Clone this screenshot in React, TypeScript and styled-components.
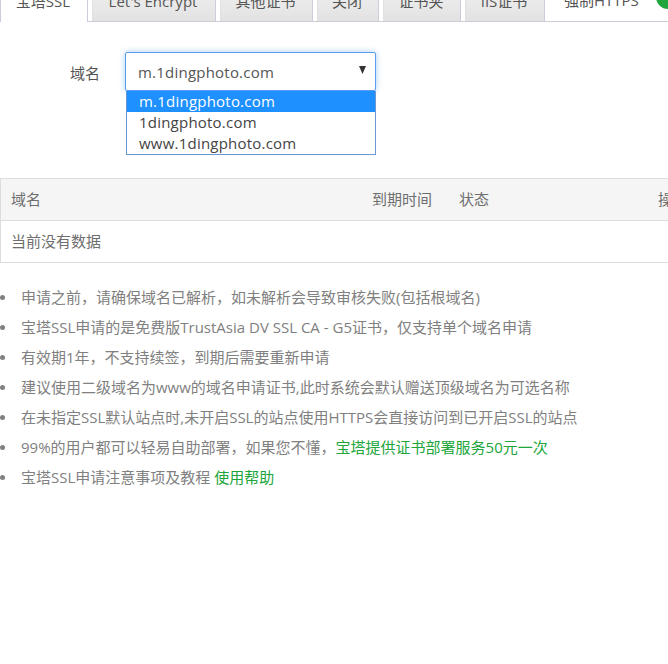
import React from 'react'
import styled, { createGlobalStyle } from 'styled-components'

const Global = createGlobalStyle`
  html, body {
    margin: 0;
    padding: 0;
    background: #fff;
    overflow: hidden;
  }
  * { box-sizing: border-box; }
`

const Page = styled.div`
  width: 668px;
  height: 664px;
  overflow: hidden;
  color: #666;
  font-family: "Open Sans", "Noto Sans CJK SC", sans-serif;
  font-size: 15px;
`

const TabBar = styled.div`
  display: flex;
  align-items: stretch;
  gap: 4px;
  height: 44px;
  margin-top: -22px;
  border-bottom: 1px solid #ccd;
  white-space: nowrap;
`

const Tab = styled.div<{ $active?: boolean; $w: number }>`
  width: ${(p) => p.$w}px;
  flex: none;
  padding-right: 2px;
  text-align: center;
  line-height: 46px;
  font-size: 15px;
  color: #555;
  border: 1px solid #ccd;
  border-width: 0 1px;
  border-left-color: ${(p) => (p.$active ? '#ccd' : '#e0e0e0')};
  background: ${(p) => (p.$active ? '#fff' : 'linear-gradient(#f4f4f4, #e2e2e2)')};
  height: ${(p) => (p.$active ? '44px' : '43px')};
`

const ForceHttps = styled.div`
  display: flex;
  align-items: center;
  flex: none;
  height: 43px;
  margin-left: 15px;
  font-size: 15px;
  color: #555;
`

const SwitchDot = styled.span`
  flex: none;
  width: 24px;
  height: 24px;
  margin-left: 17px;
  margin-top: -6px;
  border-radius: 50%;
  background: #20a53a;
`

const FormRow = styled.div`
  display: flex;
  align-items: center;
  height: 39px;
  margin-top: 30px;
`

const Label = styled.label`
  width: 100px;
  flex: none;
  padding-top: 2px;
  text-align: right;
  font-size: 15px;
  color: #555;
`

const SelectWrap = styled.div`
  position: relative;
  width: 251px;
  height: 39px;
  margin-left: 25px;
`

const SelectBox = styled.div`
  display: flex;
  align-items: center;
  justify-content: space-between;
  height: 39px;
  padding: 0 9px 0 12px;
  border: 1px solid #5b9bef;
  border-radius: 2px;
  box-shadow: 0 0 6px rgba(102, 175, 233, 0.6);
  font-size: 15px;
  letter-spacing: 0.22px;
  color: #555;
  background: #fff;
`

const Caret = styled.svg`
  width: 7px;
  height: 8px;
  margin-top: -3px;
  fill: #333;
`

const OptionList = styled.div`
  position: absolute;
  top: 39px;
  left: 1px;
  right: 0;
  border: 1px solid #6b96d6;
  border-top: 0;
  background: #fff;
`

const Option = styled.div<{ $selected?: boolean }>`
  height: 21px;
  line-height: 21px;
  padding-left: 12px;
  font-size: 15px;
  letter-spacing: 0.22px;
  color: ${(p) => (p.$selected ? '#fff' : '#444')};
  background: ${(p) => (p.$selected ? '#1e90ff' : 'transparent')};
`

const Table = styled.div`
  width: 700px;
  margin-top: 87px;
  border: 1px solid #ddd;
  border-right: 0;
`

const Row = styled.div<{ $head?: boolean }>`
  display: flex;
  align-items: center;
  padding: 0 0 ${(p) => (p.$head ? '3px' : '2px')} 10px;
  font-size: 15px;
  color: #6e6e6e;
  background: ${(p) => (p.$head ? '#f5f5f5' : '#fff')};
  border-bottom: ${(p) => (p.$head ? '1px solid #ddd' : '0')};
  height: ${(p) => (p.$head ? '42px' : '41px')};
`

const Cell = styled.div<{ $w: number }>`
  width: ${(p) => p.$w}px;
  flex: none;
`

const Tips = styled.ul`
  list-style: none;
  margin: 19px 0 0;
  padding: 0;
`

const Tip = styled.li`
  position: relative;
  height: 30px;
  line-height: 30px;
  padding-left: 21px;
  font-size: 15px;
  color: #808080;
  white-space: nowrap;

  &::before {
    content: '';
    position: absolute;
    left: 0;
    top: 13px;
    width: 5px;
    height: 5px;
    border-radius: 50%;
    background: #808080;
  }
`

const Green = styled.a`
  color: #20a53a;
`

const tabs = [
  { label: '宝塔SSL', w: 88, active: true },
  { label: "Let's Encrypt", w: 124 },
  { label: '其他证书', w: 93 },
  { label: '关闭', w: 62 },
  { label: '证书夹', w: 78 },
  { label: 'IIS证书', w: 80 },
]

const tips: React.ReactNode[] = [
  '申请之前，请确保域名已解析，如未解析会导致审核失败(包括根域名)',
  '宝塔SSL申请的是免费版TrustAsia DV SSL CA - G5证书，仅支持单个域名申请',
  '有效期1年，不支持续签，到期后需要重新申请',
  '建议使用二级域名为www的域名申请证书,此时系统会默认赠送顶级域名为可选名称',
  '在未指定SSL默认站点时,未开启SSL的站点使用HTTPS会直接访问到已开启SSL的站点',
  <>99%的用户都可以轻易自助部署，如果您不懂，<Green>宝塔提供证书部署服务50元一次</Green></>,
  <>宝塔SSL申请注意事项及教程 <Green>使用帮助</Green></>,
]

export default function App() {
  return (
    <Page>
      <Global />
      <TabBar>
        {tabs.map((t) => (
          <Tab key={t.label} $active={t.active} $w={t.w}>
            {t.label}
          </Tab>
        ))}
        <ForceHttps>
          强制HTTPS
          <SwitchDot />
        </ForceHttps>
      </TabBar>
      <FormRow>
        <Label>域名</Label>
        <SelectWrap>
          <SelectBox>
            m.1dingphoto.com
            <Caret viewBox="0 0 7 8">
              <path d="M0 0h7L3.5 8z" />
            </Caret>
          </SelectBox>
          <OptionList>
            <Option $selected>m.1dingphoto.com</Option>
            <Option>1dingphoto.com</Option>
            <Option>www.1dingphoto.com</Option>
          </OptionList>
        </SelectWrap>
      </FormRow>
      <Table>
        <Row $head>
          <Cell $w={361}>域名</Cell>
          <Cell $w={87}>到期时间</Cell>
          <Cell $w={199}>状态</Cell>
          <Cell $w={40}>操作</Cell>
        </Row>
        <Row>当前没有数据</Row>
      </Table>
      <Tips>
        {tips.map((t, i) => (
          <Tip key={i}>{t}</Tip>
        ))}
      </Tips>
    </Page>
  )
}
